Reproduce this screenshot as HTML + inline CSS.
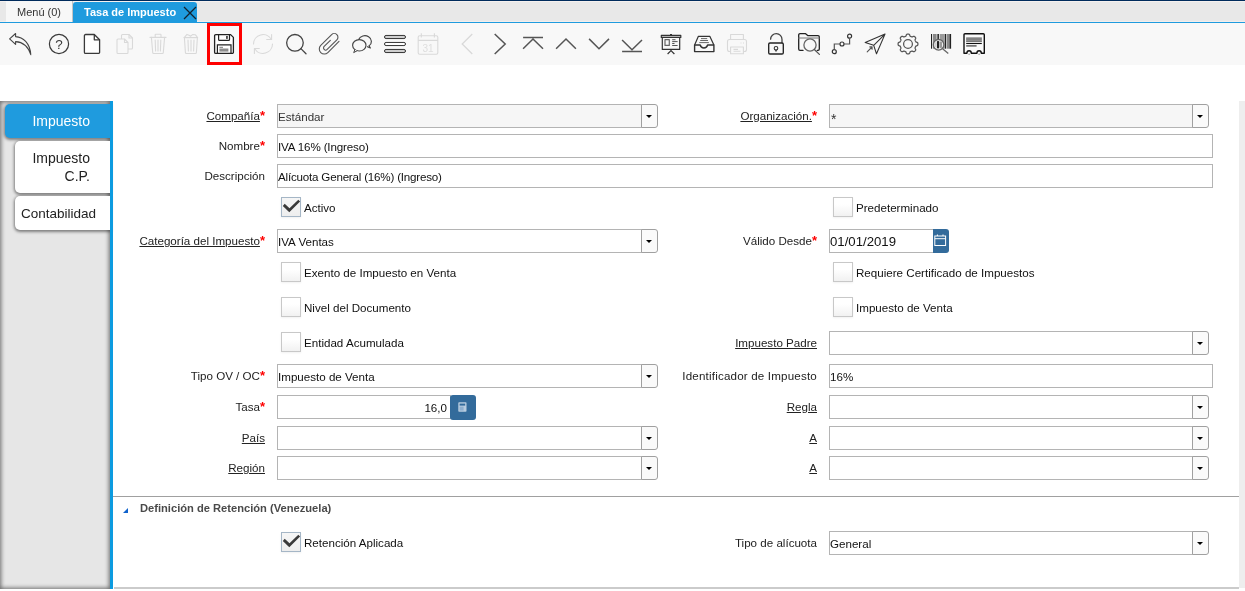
<!DOCTYPE html>
<html lang="es">
<head>
<meta charset="utf-8">
<title>Tasa de Impuesto</title>
<style>
html,body{margin:0;padding:0;}
body{width:1245px;height:591px;overflow:hidden;background:#fff;position:relative;
  font-family:"Liberation Sans","DejaVu Sans",sans-serif;font-size:11.6px;color:#222;}
#wrap{position:absolute;left:0;top:0;width:1245px;height:591px;overflow:hidden;will-change:transform;}
.abs{position:absolute;}
/* top tab bar */
#topline{left:0;top:0;width:1245px;height:1px;background:#002b5c;}
#tabbar{left:0;top:1px;width:1245px;height:21px;background:#e8e8e8;box-shadow:inset 0 1px 0 #f6f1ef, inset 0 -1px 0 #f3eeec;}
#tabmenu{left:6px;top:1px;width:66px;height:21px;background:#f7f7f7;border-right:1px solid #c4c4c4;}
#tabmenu span{position:absolute;left:11px;top:5px;font-size:11px;line-height:13px;color:#333;white-space:nowrap;}
#tabact{left:73px;top:2px;width:124px;height:21px;background:#1f9bde;border-radius:3px 3px 0 0;}
#tabact span{position:absolute;left:11px;top:4px;font-size:11px;line-height:13px;font-weight:bold;color:#fff;white-space:nowrap;}
#blueline{left:0;top:22px;width:1245px;height:1px;background:#1f9bde;}
/* toolbar */
#toolbar{left:0;top:23px;width:1245px;height:42px;background:#f8f8f8;}
#redbox{left:207px;top:23px;width:29px;height:36px;border:3px solid #fe0000;}
.ic{position:absolute;top:33px;width:22px;height:22px;overflow:visible;}
/* sidebar */
#side{left:0;top:101px;width:110px;height:488px;background:#e6e6e6;box-shadow:inset 0 0 4px 1px rgba(0,0,0,.55);}
#sidebar-blue{z-index:3;left:110px;top:101px;width:3px;height:488px;background:#0c9be0;}
.stab{position:absolute;background:#fff;border-radius:5px 0 0 5px;box-shadow:0 1px 3px 1px rgba(0,0,0,.45);font-size:14px;line-height:18px;color:#222;}
.stab span{position:absolute;white-space:nowrap;}
#st1{left:5px;top:104px;width:105px;height:34px;background:#1f9bde;color:#fff;}
#st2{left:15px;top:141px;width:95px;height:52px;}
#st3{left:15px;top:196px;width:95px;height:34px;}
/* scrollbar */
#scroll{left:1239px;top:101px;width:6px;height:487px;background:#eeeeee;}
/* form */
.lbl{position:absolute;white-space:nowrap;text-align:right;height:24px;line-height:24px;color:#222;}
.lbl u{text-decoration:underline;text-underline-offset:1px;}
.lbl b{color:#fe0000;font-weight:bold;font-size:13px;line-height:10px;position:relative;top:0px;}
.L{left:113px;width:152px;}
.R{left:665px;width:152px;}
.txt{position:absolute;box-sizing:border-box;height:24px;border:1px solid #b4b4b4;background:#fff;line-height:24px;padding-left:0;white-space:nowrap;overflow:hidden;color:#111;}
.cmb{position:absolute;height:24px;width:381px;}
.cmb .in{position:absolute;left:0;top:0;box-sizing:border-box;width:365px;height:24px;border:1px solid #b4b4b4;border-right:none;background:#fff;line-height:24px;padding-left:0;white-space:nowrap;color:#111;}
.cmb .bt{position:absolute;left:364px;top:0;box-sizing:border-box;width:17px;height:24px;border:1px solid #a0a0a0;border-radius:0 3px 3px 0;background:#fafafa;}
.cmb .bt:after{content:"";position:absolute;left:4px;top:10px;border-left:3.5px solid transparent;border-right:3.5px solid transparent;border-top:3.5px solid #000;}
.cmb.dis .in{background:#f6f6f6;color:#333;}
.cb{position:absolute;box-sizing:border-box;width:20px;height:20px;border:1px solid #c8c8c8;background:linear-gradient(#ffffff 35%,#f1f1f1);box-shadow:0 1px 2px rgba(0,0,0,.06);}
.cb.on{border-color:#a5b6c6;background:linear-gradient(#f6f6f6,#eeeeee);}
.cbl{position:absolute;white-space:nowrap;height:20px;line-height:20px;color:#111;}
.hr{position:absolute;height:1px;}
.bbtn{position:absolute;background:#336b9b;}
.txt.date{font-size:13.2px;border-right:none;}
.txt.num{text-align:right;padding-right:3px;}
#grp{left:140px;top:501px;font-size:11.15px;line-height:14px;font-weight:bold;color:#4a4a4a;white-space:nowrap;}

</style>
</head>
<body>
<div id="wrap">
<div class="abs" id="topline"></div>
<div class="abs" id="tabbar"></div>
<div class="abs" id="tabmenu"><span>Menú (0)</span></div>
<div class="abs" id="blueline"></div>
<div class="abs" id="tabact"><span>Tasa de Impuesto</span>
<svg class="abs" style="left:110px;top:4px" width="14" height="14" viewBox="0 0 14 14"><path d="M1 1 L13 13 M13 1 L1 13" stroke="#14222d" stroke-width="1.3" fill="none"/></svg>
</div>
<div class="abs" id="toolbar"></div>
<div class="abs" id="redbox"></div>
<!--ICONS-->
<svg class="ic" style="left:9px" viewBox="0 0 22 22" ><path d="M0.6,5.8 L6.6,0.5 L6.6,3.6 C14,4 21,10 21.8,21.7 C19,13 14,9 6.6,8.6 L6.6,11.4 Z" fill="none" stroke="#444" stroke-width="1.1" stroke-linejoin="round"/></svg>
<svg class="ic" style="left:48px" viewBox="0 0 22 22" ><circle cx="11" cy="11" r="9.6" fill="none" stroke="#3a3a3a" stroke-width="1.2"/><text x="11" y="15.7" text-anchor="middle" font-family="Liberation Sans, sans-serif" font-size="13.5" fill="#3a3a3a">?</text></svg>
<svg class="ic" style="left:81px" viewBox="0 0 22 22" ><path d="M4.6,1.5 H13.3 L18.6,6.8 V19.2 a1.2,1.2 0 0 1 -1.2,1.2 H4.6 a1.2,1.2 0 0 1 -1.2,-1.2 V2.7 a1.2,1.2 0 0 1 1.2,-1.2 Z" fill="#fff" stroke="#3a3a3a" stroke-width="1.3" stroke-linejoin="round"/><path d="M13.3,1.5 V6.8 H18.6" fill="none" stroke="#3a3a3a" stroke-width="1.3" stroke-linejoin="round"/></svg>
<svg class="ic" style="left:114px" viewBox="0 0 22 22" ><g fill="#f8f8f8" stroke="#d9d9d9" stroke-width="1.1" stroke-linejoin="round"><path d="M8.5,1.5 H15 L18.5,5 V15 a1,1 0 0 1 -1,1 H8.5 a1,1 0 0 1 -1,-1 V2.5 a1,1 0 0 1 1,-1 Z"/><path d="M15,1.5 V5 H18.5" fill="none"/><path d="M4,6 H10.5 L14,9.5 V19.5 a1,1 0 0 1 -1,1 H4 a1,1 0 0 1 -1,-1 V7 a1,1 0 0 1 1,-1 Z"/><path d="M10.5,6 V9.5 H14" fill="none"/></g></svg>
<svg class="ic" style="left:147px" viewBox="0 0 22 22" ><g fill="none" stroke="#d9d9d9" stroke-width="1.1" stroke-linejoin="round" stroke-linecap="round"><path d="M3,4.4 H19"/><path d="M8.2,4.4 V1.8 a.6,.6 0 0 1 .6,-.6 H13.4 a.6,.6 0 0 1 .6,.6 V4.4"/><path d="M4.4,4.4 L5.7,19.5 a1,1 0 0 0 1,1 H15.3 a1,1 0 0 0 1,-1 L17.6,4.4"/><path d="M8.2,7 L8.6,18 M11,7 V18 M13.8,7 L13.4,18"/></g></svg>
<svg class="ic" style="left:180px" viewBox="0 0 22 22" ><g fill="none" stroke="#d9d9d9" stroke-width="1.1" stroke-linejoin="round" stroke-linecap="round"><path d="M4.2,4.6 L7,1.4 L9,2.2 L10.5,3.2 L12.5,1.6 L15.5,1.8 L17.6,4.6"/><path d="M4.2,4.6 H17.6"/><path d="M4.4,4.6 L5.4,19.5 a1,1 0 0 0 1,1 H15.4 a1,1 0 0 0 1,-1 L17.4,4.6"/><path d="M8,7 L8.4,18 M11,7 V18 M14,7 L13.6,18"/></g></svg>
<svg class="ic" style="left:213px" viewBox="0 0 22 22" ><path d="M2.8,1.6 H17.6 L20.4,4.4 V19.2 a1.2,1.2 0 0 1 -1.2,1.2 H2.8 a1.2,1.2 0 0 1 -1.2,-1.2 V2.8 a1.2,1.2 0 0 1 1.2,-1.2 Z" fill="#fff" stroke="#222" stroke-width="1.3" stroke-linejoin="round"/><path d="M5.6,1.6 V6.4 a1,1 0 0 0 1,1 H15.5 a1,1 0 0 0 1,-1 V1.6" fill="none" stroke="#222" stroke-width="1.2"/><rect x="13.2" y="3" width="1.5" height="2.9" fill="#222"/><path d="M4.4,20.4 V11.8 H18 V20.4" fill="none" stroke="#222" stroke-width="1.2"/><path d="M6.4,14.3 H10" stroke="#777" stroke-width="1"/><rect x="6.4" y="15.5" width="9" height="3.1" fill="#8c8c8c"/></svg>
<svg class="ic" style="left:252px" viewBox="0 0 22 22" ><g fill="none" stroke="#d9d9d9" stroke-width="1.1" stroke-linecap="round" stroke-linejoin="round"><path d="M1.5,11 A9.5,9.5 0 0 1 19.2,6.3"/><path d="M19.6,1.6 V6.5 H14.7"/><path d="M20.5,11 A9.5,9.5 0 0 1 2.8,15.7"/><path d="M2.4,20.4 V15.5 H7.3"/></g></svg>
<svg class="ic" style="left:285px" viewBox="0 0 22 22" ><circle cx="9.95" cy="9.8" r="8.3" fill="none" stroke="#444" stroke-width="1.3"/><path d="M15.9,15.6 L21,20.7" stroke="#444" stroke-width="1.3" stroke-linecap="round"/></svg>
<svg class="ic" style="left:318px" viewBox="0 0 22 22" ><g transform="translate(11.5,11) rotate(45) scale(.92)"><path d="M5.3,-9.3 L5.3,7.85 A5.45,5.45 0 0 1 -5.6,7.85 L-5.6,-8.9 A4,4 0 0 1 2.4,-8.9 L2.4,6 A2.3,2.3 0 0 1 -2.2,6 L-2.2,-3.5" fill="none" stroke="#555" stroke-width="1.2" stroke-linecap="round"/></g></svg>
<svg class="ic" style="left:351px" viewBox="0 0 22 22" ><g fill="none" stroke="#444" stroke-width="1.15" stroke-linejoin="round" stroke-linecap="round"><path d="M7.6,6.45 A6.6,5.7 0 1 1 18.04,12.77 L19.4,15 L16.4,13.7"/><ellipse cx="8.3" cy="12.3" rx="6.7" ry="5.7" fill="#f8f8f8"/><path d="M3.9,16.6 L2.7,19.6 L6.2,17.7" fill="#f8f8f8" stroke-width="1"/></g></svg>
<svg class="ic" style="left:384px" viewBox="0 0 22 22" ><g stroke="#333" stroke-width="1"><rect x=".5" y="2.45" width="21" height="3.1" rx="1.55" fill="#cfcfcf"/><rect x=".5" y="9.45" width="21" height="3.1" rx="1.55" fill="#fff"/><rect x=".5" y="16.45" width="21" height="3.1" rx="1.55" fill="#cfcfcf"/></g></svg>
<svg class="ic" style="left:417px" viewBox="0 0 22 22" ><g fill="none" stroke="#d9d9d9" stroke-width="1.1"><rect x="1.2" y="2.7" width="19.6" height="18.5" rx="1.5"/><path d="M1.2,7.4 H20.8 M4.3,0.2 V4.5 M17.4,0.2 V4.5"/></g><text x="11" y="18.6" text-anchor="middle" font-family="Liberation Sans, sans-serif" font-size="10" fill="#dedede">31</text></svg>
<svg class="ic" style="left:456px" viewBox="0 0 22 22" ><path d="M16.3,1 L6.2,11 L16.3,21" fill="none" stroke="#d9d9d9" stroke-width="1.3"/></svg>
<svg class="ic" style="left:489px" viewBox="0 0 22 22" ><path d="M5.7,1 L16.2,11 L5.7,21" fill="none" stroke="#555" stroke-width="1.5"/></svg>
<svg class="ic" style="left:522px" viewBox="0 0 22 22" ><path d="M1.1,4.4 H21 M1.1,15.8 L11,6 L21,15.8" fill="none" stroke="#555" stroke-width="1.5"/></svg>
<svg class="ic" style="left:555px" viewBox="0 0 22 22" ><path d="M1.1,15.8 L11,6 L20.9,15.8" fill="none" stroke="#555" stroke-width="1.5"/></svg>
<svg class="ic" style="left:588px" viewBox="0 0 22 22" ><path d="M1.1,5.9 L11,15.7 L21,5.9" fill="none" stroke="#555" stroke-width="1.5"/></svg>
<svg class="ic" style="left:621px" viewBox="0 0 22 22" ><path d="M1.1,7 L11,16.8 L21,7 M1.1,18.4 H21" fill="none" stroke="#555" stroke-width="1.5"/></svg>
<svg class="ic" style="left:660px" viewBox="0 0 22 22" ><g fill="none" stroke="#333" stroke-width="1.2" stroke-linejoin="round"><rect x="1.3" y="2.4" width="19.5" height="2" fill="#ddd"/><path d="M10,1.6 H12"/><path d="M2.3,4.4 V16.4 H19.7 V4.4"/><path d="M11,16.4 V18 M7.6,21 L11,17.6 L14.4,21"/><rect x="5" y="6.6" width="4.3" height="5.8" stroke="#666"/><path d="M12.2,6.7 H15.5 M12.2,8.6 H17.6 M12.2,10.5 H14.5 M12.2,12.5 H17.6" stroke="#555" stroke-width="1"/></g></svg>
<svg class="ic" style="left:693px" viewBox="0 0 22 22" ><g fill="none" stroke="#333" stroke-width="1.2" stroke-linejoin="round"><path d="M1.6,12 L5.4,3.3 H16.8 L20.9,12"/><path d="M1.6,12 H7.2 A3.8,3.8 0 0 0 14.6,12 H20.9 V18.6 H1.6 Z" stroke-width="1.4"/><path d="M8,5.6 H14.2 M7.2,7.5 H15 M6.3,9.6 H15.9" stroke="#666" stroke-width="1"/></g></svg>
<svg class="ic" style="left:726px" viewBox="0 0 22 22" ><g fill="none" stroke="#d9d9d9" stroke-width="1.1" stroke-linejoin="round"><path d="M4.6,6.5 V1.5 H17.4 V6.5"/><rect x="1.5" y="6.5" width="19" height="12" rx="2"/><rect x="4.6" y="14" width="12.8" height="6.8" fill="#f8f8f8"/><path d="M7.5,16.4 H12 M7.5,18.2 H14.5 M14.5,10 H15.5 M17,10 H18"/></g></svg>
<svg class="ic" style="left:765px" viewBox="0 0 22 22" ><g fill="none" stroke-linecap="round"><path d="M5.6,6.2 A5.7,5.7 0 0 1 17,6.4 V9.5" stroke="#444" stroke-width="1.3"/><rect x="3.7" y="10" width="14.6" height="11" rx="1.3" stroke="#222" stroke-width="1.35"/><circle cx="11" cy="15.3" r="1.8" stroke="#333" stroke-width="1.1"/><path d="M11,17 V18" stroke="#333" stroke-width="1.4"/></g></svg>
<svg class="ic" style="left:798px" viewBox="0 0 22 22" ><g fill="none" stroke-linejoin="round" stroke-linecap="round"><path d="M5,17.4 H2 a1.3,1.3 0 0 1 -1.3,-1.3 V2 a1.3,1.3 0 0 1 1.3,-1.3 H7.6 L10,2.7 H20 a1.3,1.3 0 0 1 1.3,1.3 V16.1 a1.3,1.3 0 0 1 -1.3,1.3 H19.3" stroke="#222" stroke-width="1.3"/><path d="M0.7,5 H21.3" stroke="#777" stroke-width="1.1"/><circle cx="12" cy="12" r="6.1" stroke="#666" stroke-width="1.3" fill="#f8f8f8"/><path d="M16.6,16.8 L21.4,21.4" stroke="#555" stroke-width="1.3"/></g></svg>
<svg class="ic" style="left:831px" viewBox="0 0 22 22" ><g fill="none" stroke="#333" stroke-width="1.2"><circle cx="3.3" cy="18.7" r="2"/><circle cx="11" cy="11" r="2"/><circle cx="18.6" cy="3.2" r="2"/><path d="M3.3,16.7 V11 H9 M13,11 H18.6 V5.2" stroke="#555"/></g></svg>
<svg class="ic" style="left:864px" viewBox="0 0 22 22" ><g fill="none" stroke="#333" stroke-width="1.1" stroke-linejoin="round" stroke-linecap="round"><path d="M21,1.1 L1.2,9.5 L9.7,12.3 L12.5,20.8 Z M9.7,12.3 L21,1.1"/><path d="M3.2,18.8 L8,14 M5.8,13.9 H8.1 V16.2" stroke="#555"/></g></svg>
<svg class="ic" style="left:897px" viewBox="0 0 22 22" ><path d="M20.90,11.00 L20.89,11.26 L20.88,11.52 L20.84,11.77 L20.77,12.03 L20.65,12.27 L20.41,12.49 L20.02,12.67 L19.54,12.82 L19.14,12.95 L18.89,13.11 L18.74,13.29 L18.64,13.48 L18.55,13.67 L18.47,13.87 L18.39,14.06 L18.31,14.25 L18.23,14.45 L18.16,14.65 L18.10,14.85 L18.08,15.09 L18.14,15.38 L18.32,15.75 L18.56,16.19 L18.71,16.60 L18.72,16.92 L18.64,17.18 L18.51,17.41 L18.35,17.62 L18.18,17.81 L18.00,18.00 L17.81,18.18 L17.62,18.35 L17.41,18.51 L17.18,18.64 L16.92,18.72 L16.60,18.71 L16.19,18.56 L15.75,18.32 L15.38,18.14 L15.09,18.08 L14.85,18.10 L14.65,18.16 L14.45,18.23 L14.25,18.31 L14.06,18.39 L13.87,18.47 L13.67,18.55 L13.48,18.64 L13.29,18.74 L13.11,18.89 L12.95,19.14 L12.82,19.54 L12.67,20.02 L12.49,20.41 L12.27,20.65 L12.03,20.77 L11.77,20.84 L11.52,20.88 L11.26,20.89 L11.00,20.90 L10.74,20.89 L10.48,20.88 L10.23,20.84 L9.97,20.77 L9.73,20.65 L9.51,20.41 L9.33,20.02 L9.18,19.54 L9.05,19.14 L8.89,18.89 L8.71,18.74 L8.52,18.64 L8.33,18.55 L8.13,18.47 L7.94,18.39 L7.75,18.31 L7.55,18.23 L7.35,18.16 L7.15,18.10 L6.91,18.08 L6.62,18.14 L6.25,18.32 L5.81,18.56 L5.40,18.71 L5.08,18.72 L4.82,18.64 L4.59,18.51 L4.38,18.35 L4.19,18.18 L4.00,18.00 L3.82,17.81 L3.65,17.62 L3.49,17.41 L3.36,17.18 L3.28,16.92 L3.29,16.60 L3.44,16.19 L3.68,15.75 L3.86,15.38 L3.92,15.09 L3.90,14.85 L3.84,14.65 L3.77,14.45 L3.69,14.25 L3.61,14.06 L3.53,13.87 L3.45,13.67 L3.36,13.48 L3.26,13.29 L3.11,13.11 L2.86,12.95 L2.46,12.82 L1.98,12.67 L1.59,12.49 L1.35,12.27 L1.23,12.03 L1.16,11.77 L1.12,11.52 L1.11,11.26 L1.10,11.00 L1.11,10.74 L1.12,10.48 L1.16,10.23 L1.23,9.97 L1.35,9.73 L1.59,9.51 L1.98,9.33 L2.46,9.18 L2.86,9.05 L3.11,8.89 L3.26,8.71 L3.36,8.52 L3.45,8.33 L3.53,8.13 L3.61,7.94 L3.69,7.75 L3.77,7.55 L3.84,7.35 L3.90,7.15 L3.92,6.91 L3.86,6.62 L3.68,6.25 L3.44,5.81 L3.29,5.40 L3.28,5.08 L3.36,4.82 L3.49,4.59 L3.65,4.38 L3.82,4.19 L4.00,4.00 L4.19,3.82 L4.38,3.65 L4.59,3.49 L4.82,3.36 L5.08,3.28 L5.40,3.29 L5.81,3.44 L6.25,3.68 L6.62,3.86 L6.91,3.92 L7.15,3.90 L7.35,3.84 L7.55,3.77 L7.75,3.69 L7.94,3.61 L8.13,3.53 L8.33,3.45 L8.52,3.36 L8.71,3.26 L8.89,3.11 L9.05,2.86 L9.18,2.46 L9.33,1.98 L9.51,1.59 L9.73,1.35 L9.97,1.23 L10.23,1.16 L10.48,1.12 L10.74,1.11 L11.00,1.10 L11.26,1.11 L11.52,1.12 L11.77,1.16 L12.03,1.23 L12.27,1.35 L12.49,1.59 L12.67,1.98 L12.82,2.46 L12.95,2.86 L13.11,3.11 L13.29,3.26 L13.48,3.36 L13.67,3.45 L13.87,3.53 L14.06,3.61 L14.25,3.69 L14.45,3.77 L14.65,3.84 L14.85,3.90 L15.09,3.92 L15.38,3.86 L15.75,3.68 L16.19,3.44 L16.60,3.29 L16.92,3.28 L17.18,3.36 L17.41,3.49 L17.62,3.65 L17.81,3.82 L18.00,4.00 L18.18,4.19 L18.35,4.38 L18.51,4.59 L18.64,4.82 L18.72,5.08 L18.71,5.40 L18.56,5.81 L18.32,6.25 L18.14,6.62 L18.08,6.91 L18.10,7.15 L18.16,7.35 L18.23,7.55 L18.31,7.75 L18.39,7.94 L18.47,8.13 L18.55,8.33 L18.64,8.52 L18.74,8.71 L18.89,8.89 L19.14,9.05 L19.54,9.18 L20.02,9.33 L20.41,9.51 L20.65,9.73 L20.77,9.97 L20.84,10.23 L20.88,10.48 L20.89,10.74 Z" fill="none" stroke="#555" stroke-width="1.25" stroke-linejoin="round"/><circle cx="11" cy="11" r="4.4" fill="none" stroke="#555" stroke-width="1.25"/></svg>
<svg class="ic" style="left:930px" viewBox="0 0 22 22" ><rect x="1" y="1" width="1" height="14.7" fill="#222"/><rect x="2.8" y="1" width="3.8" height="14.7" fill="#8a8a8a"/><rect x="7.4" y="1" width="1.5" height="14.7" fill="#222"/><rect x="9.7" y="1" width="4.6" height="14.7" fill="#9a9a9a"/><rect x="14.7" y="1" width="1.3" height="14.7" fill="#222"/><rect x="16.5" y="1" width="2.6" height="14.7" fill="#8a8a8a"/><rect x="19.4" y="1" width="1.7" height="14.7" fill="#222"/><circle cx="8.6" cy="11.8" r="5.3" fill="#f0f0f0" stroke="#666" stroke-width="1.3"/><rect x="6.9" y="8" width="2.3" height="7.4" rx=".8" fill="#222"/><rect x="9.8" y="8.4" width="2.2" height="6.6" rx=".8" fill="#999"/><rect x="4.6" y="9.5" width="1" height="4.6" fill="#bbb"/><path d="M12.6,15.8 L18.3,20.6" stroke="#666" stroke-width="1.3"/></svg>
<svg class="ic" style="left:963px" viewBox="0 0 22 22" ><path d="M1,20.3 V1.8 a1,1 0 0 1 1,-1 H20.3 a1,1 0 0 1 1,1 V20.3 H18.3 a2.2,2.6 0 0 0 -4.4,0 H8.3 a2.2,2.6 0 0 0 -4.4,0 Z" fill="#fafafa" stroke="#111" stroke-width="1.4" stroke-linejoin="round"/><rect x="3.2" y="4.4" width="15.6" height="4.7" fill="#9a9a9a"/><path d="M3.2,5.2 H18.8 M3.2,6.8 H18.8 M3.2,8.4 H18.8" stroke="#777" stroke-width="1"/><path d="M3.2,10.5 H18.8" stroke="#111" stroke-width="1.1"/><path d="M3.2,12.9 H13.6" stroke="#555" stroke-width="1.4"/><circle cx="6.1" cy="21.2" r=".7" fill="#888"/><circle cx="16.1" cy="21.2" r=".7" fill="#888"/></svg>
<!--/ICONS-->

<div class="abs" id="side"></div>
<div class="abs" id="sidebar-blue"></div>
<div class="stab" id="st1"><span style="right:20px;top:8px">Impuesto</span></div>
<div class="stab" id="st2"><span style="right:20px;top:8px">Impuesto</span><span style="right:20px;top:26px">C.P.</span></div>
<div class="stab" id="st3"><span style="left:6px;top:9px;font-size:13.5px">Contabilidad</span></div>
<div class="abs" id="scroll"></div>

<!--FORM-->
<div class="lbl L" style="top:104px"><u>Compañía</u><b>*</b></div>
<div class="cmb dis" style="left:277px;top:104px;width:381px"><div class="in" style="width:365px">Estándar</div><div class="bt" style="left:364px"></div></div>
<div class="lbl R" style="top:104px"><u>Organización.</u><b>*</b></div>
<div class="cmb dis" style="left:829px;top:104px;width:380px"><div class="in" style="width:364px"><span style="font-size:14px;position:relative;top:1.5px;left:1px">*</span></div><div class="bt" style="left:363px"></div></div>
<div class="lbl L" style="top:134px">Nombre<b>*</b></div>
<div class="txt" style="left:277px;top:134px;width:936px"><span style="letter-spacing:-.15px">IVA 16% (Ingreso)</span></div>
<div class="lbl L" style="top:164px">Descripción</div>
<div class="txt" style="left:277px;top:164px;width:936px"><span style="letter-spacing:-.2px">Alícuota General (16%) (Ingreso)</span></div>
<div class="cb on" style="left:281px;top:197px"><svg width="19" height="18" viewBox="0 0 19 18" style="position:absolute;left:0;top:0;overflow:visible"><path d="M0.8,8 L2.7,5.7 L7.5,10.2 L16.3,1.7 L18.1,3.4 L7.3,14.3 Z" fill="#3a3a3a"/></svg></div><div class="cbl" style="left:304px;top:198px">Activo</div>
<div class="cb" style="left:833px;top:197px"></div><div class="cbl" style="left:856px;top:198px">Predeterminado</div>
<div class="lbl L" style="top:229px"><u>Categoría del Impuesto</u><b>*</b></div>
<div class="cmb" style="left:277px;top:229px;width:381px"><div class="in" style="width:365px">IVA Ventas</div><div class="bt" style="left:364px"></div></div>
<div class="lbl R" style="top:229px">Válido Desde<b>*</b></div>
<div class="txt date" style="left:829px;top:229px;width:105px">01/01/2019</div><div class="bbtn" style="left:933px;top:229px;width:16px;height:24px;border-radius:0 3px 3px 0"><svg width="16" height="24" viewBox="0 0 16 24" style="position:absolute;left:0;top:0"><g fill="none" stroke="#fff" stroke-width="1"><rect x="1.8" y="7" width="10.8" height="9.5"/><path d="M1.8,9.7 H12.6 M4.4,5.5 V7 M10,5.5 V7" /></g></svg></div>
<div class="cb" style="left:281px;top:262px"></div><div class="cbl" style="left:304px;top:263px">Exento de Impuesto en Venta</div>
<div class="cb" style="left:833px;top:262px"></div><div class="cbl" style="left:856px;top:263px">Requiere Certificado de Impuestos</div>
<div class="cb" style="left:281px;top:297px"></div><div class="cbl" style="left:304px;top:298px">Nivel del Documento</div>
<div class="cb" style="left:833px;top:297px"></div><div class="cbl" style="left:856px;top:298px">Impuesto de Venta</div>
<div class="cb" style="left:281px;top:332px"></div><div class="cbl" style="left:304px;top:333px">Entidad Acumulada</div>
<div class="lbl R" style="top:331px"><u>Impuesto Padre</u></div>
<div class="cmb" style="left:829px;top:331px;width:380px"><div class="in" style="width:364px"></div><div class="bt" style="left:363px"></div></div>
<div class="lbl L" style="top:364px">Tipo OV / OC<b>*</b></div>
<div class="cmb" style="left:277px;top:364px;width:381px"><div class="in" style="width:365px">Impuesto de Venta</div><div class="bt" style="left:364px"></div></div>
<div class="lbl R" style="top:364px"><span style="letter-spacing:.18px">Identificador de Impuesto</span></div>
<div class="txt" style="left:829px;top:364px;width:384px">16%</div>
<div class="lbl L" style="top:395px">Tasa<b>*</b></div>
<div class="txt num" style="left:277px;top:395px;width:174px">16,0</div><div class="bbtn" style="left:450px;top:395px;width:26px;height:25px;border-radius:3px"><svg width="26" height="25" viewBox="0 0 26 25" style="position:absolute;left:0;top:0"><rect x="8.3" y="7.2" width="8.2" height="9.6" rx=".8" fill="#b9cde0"/><rect x="9.6" y="8.6" width="5.6" height="2" fill="#336b9b"/><rect x="9.6" y="11.6" width="4" height="4" fill="#8fb0cf"/></svg></div>
<div class="lbl R" style="top:395px"><u>Regla</u></div>
<div class="cmb" style="left:829px;top:395px;width:380px"><div class="in" style="width:364px"></div><div class="bt" style="left:363px"></div></div>
<div class="lbl L" style="top:426px"><u>País</u></div>
<div class="cmb" style="left:277px;top:426px;width:381px"><div class="in" style="width:365px"></div><div class="bt" style="left:364px"></div></div>
<div class="lbl R" style="top:426px"><u>A</u></div>
<div class="cmb" style="left:829px;top:426px;width:380px"><div class="in" style="width:364px"></div><div class="bt" style="left:363px"></div></div>
<div class="lbl L" style="top:456px"><u>Región</u></div>
<div class="cmb" style="left:277px;top:456px;width:381px"><div class="in" style="width:365px"></div><div class="bt" style="left:364px"></div></div>
<div class="lbl R" style="top:456px"><u>A</u></div>
<div class="cmb" style="left:829px;top:456px;width:380px"><div class="in" style="width:364px"></div><div class="bt" style="left:363px"></div></div>
<div class="hr" style="left:113px;top:496px;width:1126px;background:#a0a0a0"></div>
<svg class="abs" style="left:122px;top:507px" width="7" height="7" viewBox="0 0 7 7"><path d="M6,1 V6 H1 Z" fill="#0f62cc"/></svg>
<div class="abs" id="grp">Definición de Retención (Venezuela)</div>
<div class="cb on" style="left:281px;top:532px"><svg width="19" height="18" viewBox="0 0 19 18" style="position:absolute;left:0;top:0;overflow:visible"><path d="M0.8,8 L2.7,5.7 L7.5,10.2 L16.3,1.7 L18.1,3.4 L7.3,14.3 Z" fill="#3a3a3a"/></svg></div><div class="cbl" style="left:304px;top:533px">Retención Aplicada</div>
<div class="lbl R" style="top:531px">Tipo de alícuota</div>
<div class="cmb" style="left:829px;top:531px;width:380px"><div class="in" style="width:364px">General</div><div class="bt" style="left:363px"></div></div>
<div class="hr" style="left:114px;top:587px;width:1125px;height:2px;background:#cbcbcb"></div>
<!--/FORM-->

</div>
</body>
</html>
